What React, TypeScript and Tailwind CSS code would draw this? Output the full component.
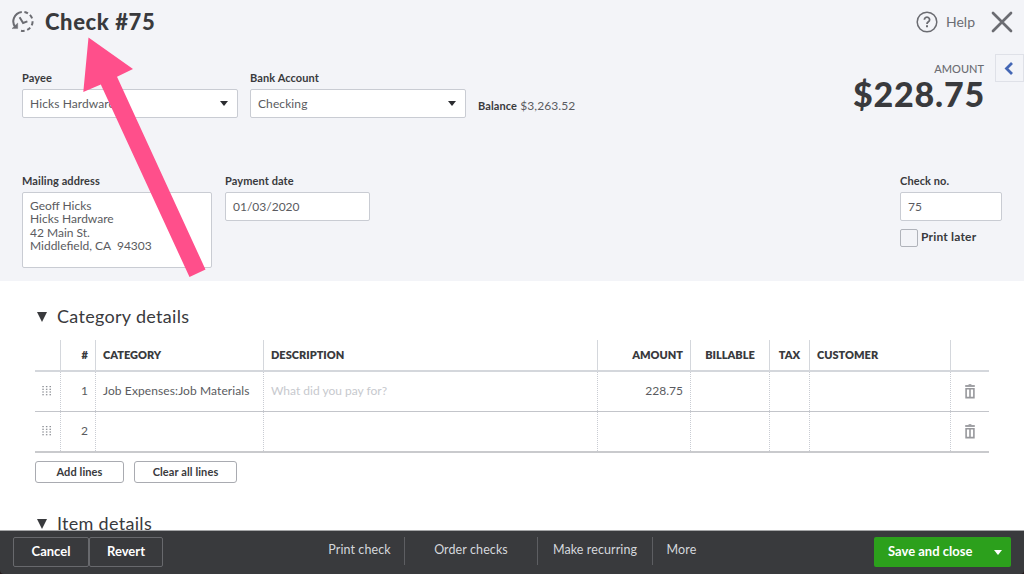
import React from 'react';
import type { ReactNode } from 'react';
import clsx from 'clsx';

const HistoryIcon: React.FC = () => (
  <svg className="h-6 w-6 text-[#6b6c72]" viewBox="0 0 24 24" fill="none" stroke="currentColor" strokeWidth={2}>
    <path d="M4.600 17.600A9.600 9.600 0 0 1 10.800 1.900" />
    <path d="M13.400 1.900a9.600 9.600 0 0 1 3.500 1.400" />
    <path d="M18.900 4.900a9.600 9.600 0 0 1 2.200 3.500" />
    <path d="M21.600 11.200a9.600 9.600 0 0 1-.9 4.100" />
    <path d="M19.200 17.600a9.600 9.600 0 0 1-3 2.300" />
    <path d="M13.600 20.800a9.600 9.600 0 0 1-3.600-.1" />
    <path d="M1 18.600h5.700v-5.600z" fill="currentColor" strokeWidth={0.4} />
    <path d="M8.600 7.200l3.500 5.800 4.300-1.600" />
  </svg>
);

const HelpIcon: React.FC = () => (
  <svg className="h-[22px] w-[22px] text-[#6b6c72]" viewBox="0 0 22 22" fill="none" stroke="currentColor">
    <circle cx="11" cy="11" r="9.8" strokeWidth={1.5} />
    <path d="M8.400 8.700a2.600 2.500 0 1 1 4 2.100c-.9.6-1.4 1-1.4 2.100" strokeWidth={1.8} />
    <path d="M11 14.200v2" strokeWidth={2} />
  </svg>
);

const CloseIcon: React.FC = () => (
  <svg className="h-[22px] w-[22px] text-[#6b6c72]" viewBox="0 0 22 22" stroke="currentColor" strokeWidth={2.7} strokeLinecap="round">
    <path d="M2 2l18 18M20 2L2 20" />
  </svg>
);

const TrashIcon: React.FC = () => (
  <svg className="h-[15px] w-[10px] text-[#97989c]" viewBox="0 0 10 15" fill="none" stroke="currentColor">
    <path d="M.2 2h9.600" strokeWidth={1.8} />
    <path d="M3.600.7h2.800" strokeWidth={1} />
    <path d="M1.100 4.800h7.800v8.800H1.100z" strokeWidth={1.6} />
    <path d="M5 5v8.400" strokeWidth={1.6} />
  </svg>
);

const DragHandle: React.FC = () => (
  <svg className="h-[10px] w-[10px] text-[#8d9096]" viewBox="0 0 10 10" fill="currentColor">
    {[0.3, 3.9, 7.5].map((x) =>
      [0, 2.7, 5.4, 8.1].map((y) => <rect key={`${x}-${y}`} x={x} y={y} width="1.5" height="1.2" />)
    )}
  </svg>
);

interface CaretProps {
  className?: string;
}

const Caret: React.FC<CaretProps> = ({ className = '' }) => (
  <svg className={className} viewBox="0 0 10 6" preserveAspectRatio="none" fill="currentColor">
    <path d="M0 0h10L5 6z" />
  </svg>
);

interface FieldProps {
  label: string;
  className?: string;
  children: ReactNode;
}

const Field: React.FC<FieldProps> = ({ label, className = '', children }) => (
  <div className={className}>
    <div className="h-[18px] text-[11px] leading-[13px] font-bold tracking-[0.1px]">{label}</div>
    {children}
  </div>
);

interface SelectBoxProps {
  value: string;
}

const SelectBox: React.FC<SelectBoxProps> = ({ value }) => (
  <div className="flex h-[29px] items-center justify-between rounded-[2px] border border-[#c9ccd3] bg-white pr-[9px] pl-[7px] text-xs text-[#5a5b60]">
    <span className="tracking-[0.1px]">{value}</span>
    <Caret className="h-[5px] w-2 text-[#2b2c30]" />
  </div>
);

interface TextBoxProps {
  value: string;
}

const TextBox: React.FC<TextBoxProps> = ({ value }) => (
  <div className="flex h-[29px] items-center rounded-[2px] border border-[#c9ccd3] bg-white px-[7px] text-xs text-[#5a5b60]">
    {value}
  </div>
);

interface SectionTitleProps {
  children: ReactNode;
}

const SectionTitle: React.FC<SectionTitleProps> = ({ children }) => (
  <div className="flex h-6 items-center gap-[10px] pl-[2px] text-lg tracking-[0.3px]">
    <Caret className="mt-px h-[10px] w-[10px]" />
    {children}
  </div>
);

const ROW_GRID = 'grid grid-cols-[26px_35px_168px_334px_93px_79px_40px_141px_38px]';

const headings = [
  { label: '' },
  { label: '#', align: 'justify-end' },
  { label: 'CATEGORY' },
  { label: 'DESCRIPTION' },
  { label: 'AMOUNT', align: 'justify-end' },
  { label: 'BILLABLE', align: 'justify-center' },
  { label: 'TAX', align: 'justify-center' },
  { label: 'CUSTOMER' },
  { label: '' }
];

const lines = [
  { category: 'Job Expenses:Job Materials', placeholder: 'What did you pay for?', amount: '228.75' },
  { category: '', placeholder: '', amount: '' }
];

const cell = 'flex items-center border-r border-dotted border-[#c9ccd3] px-[7px] pb-px';

const LinesTable: React.FC = () => (
  <div className="w-[954px] text-xs text-[#5a5b60]">
    <div className={clsx(ROW_GRID, 'h-[32px] border-b-2 border-[#d4d7dc] text-[11px] font-extrabold text-[#393a3d]')}>
      {headings.map((heading, i) => (
        <div
          key={i}
          className={clsx(
            'flex items-center border-[#d4d7dc]',
            i < 8 && 'border-r',
            heading.label !== 'TAX' && 'px-[7px]',
            heading.align
          )}
        >
          {heading.label}
        </div>
      ))}
    </div>
    {lines.map((line, i) => (
      <div
        key={i}
        className={clsx(ROW_GRID, i === 0 ? 'h-10 border-b border-[#c3c5ca]' : 'h-[41px] border-b-2 border-[#c9cacd]')}
      >
        <div className={cell}>
          <DragHandle />
        </div>
        <div className={clsx(cell, 'justify-end')}>{i + 1}</div>
        <div className={clsx(cell, 'tracking-[0.1px]')}>
          <span className="whitespace-nowrap">{line.category}</span>
        </div>
        <div className={clsx(cell, 'text-[#c7c9ce]')}>{line.placeholder}</div>
        <div className={clsx(cell, 'justify-end')}>{line.amount}</div>
        <div className={cell} />
        <div className={cell} />
        <div className={cell} />
        <div className="flex items-center justify-center">
          <TrashIcon />
        </div>
      </div>
    ))}
  </div>
);

const CheckHeader: React.FC = () => (
  <header className="flex h-[281px] shrink-0 flex-col bg-[#f3f4f8]">
    <div className="flex h-[43px] items-center justify-between px-[11px]">
      <div className="flex items-center gap-[10px]">
        <HistoryIcon />
        <h1 className="text-[22px] leading-6 font-black tracking-[0.6px]">Check #75</h1>
      </div>
      <div className="flex items-center text-sm text-[#6b6c72]">
        <HelpIcon />
        <span className="ml-[8px]">Help</span>
        <span className="ml-[16px]">
          <CloseIcon />
        </span>
      </div>
    </div>

    <div className="flex h-[131px] justify-between pl-[22px]">
      <div className="flex pt-[28px]">
        <Field label="Payee" className="w-[216px]">
          <SelectBox value="Hicks Hardware" />
        </Field>
        <Field label="Bank Account" className="ml-3 w-[216px]">
          <SelectBox value="Checking" />
        </Field>
        <div className="ml-3 pt-[27px] text-xs tracking-[0.1px] text-[#5a5b60]">
          <span className="text-[11px] font-bold text-[#393a3d]">Balance</span> $3,263.52
        </div>
      </div>
      <div className="flex gap-[11px] pt-[11px]">
        <div className="pt-[8px] text-right">
          <div className="text-[11px] leading-[14px] font-medium text-[#6b6c72]">AMOUNT</div>
          <div className="-mr-px text-[34px] leading-[36px] font-black tracking-[0.8px]">$228.75</div>
        </div>
        <div className="flex h-[28px] w-[29px] items-center justify-center border border-[#dfe1e8] pr-[2px] text-[#4467b5]">
          <svg className="h-[13px] w-[10px]" viewBox="0 0 10 13" fill="none" stroke="currentColor" strokeWidth={2.8}>
            <path d="M8 1L2.500 6.500 8 12" />
          </svg>
        </div>
      </div>
    </div>

    <div className="flex px-[22px]">
      <Field label="Mailing address" className="w-[190px]">
        <div className="h-[76px] rounded-[2px] border border-[#c9ccd3] bg-white px-[7px] pt-[6px] text-xs leading-[13.3px] whitespace-pre text-[#5a5b60]">
          {'Geoff Hicks\nHicks Hardware\n42 Main St.\nMiddlefield, CA  94303'}
        </div>
      </Field>
      <Field label="Payment date" className="ml-[13px] w-[145px]">
        <TextBox value="01/03/2020" />
      </Field>
      <Field label="Check no." className="ml-auto w-[102px]">
        <TextBox value="75" />
        <div className="mt-2 flex gap-[3px] text-xs font-bold tracking-[0.2px]">
          <span className="h-[18px] w-[18px] rounded-[2px] border border-[#b0b3ba]" />
          Print later
        </div>
      </Field>
    </div>
  </header>
);

const ACTIONS = [
  { label: 'Print check', width: 'w-[90px]' },
  { label: 'Order checks', width: 'w-[133px]' },
  { label: 'Make recurring', width: 'w-[115px]' },
  { label: 'More', width: 'w-[57px]' }
];

const ActionBar: React.FC = () => (
  <footer className="flex h-[44px] shrink-0 rounded-b-[4px] border-t border-[#a5a6a8] bg-[#393a3d] px-[13px] text-[13px] text-white">
    <div className="flex pt-[6px] font-bold">
      <button className="h-[30px] w-[76px] rounded-[2px] border border-[#68696d]">Cancel</button>
      <button className="h-[30px] w-[74px] rounded-[2px] border border-[#68696d]">Revert</button>
    </div>
    <nav className="ml-[152px] flex pt-[6px] text-[12.5px] tracking-[0.1px] text-[#d4d7dc]">
      {ACTIONS.map((action, i) => (
        <div
          key={action.label}
          className={clsx(
            'flex h-[28px] items-center justify-center pb-[2px] whitespace-nowrap',
            action.width,
            i < ACTIONS.length - 1 && 'border-r border-[#5d5e62]'
          )}
        >
          {action.label}
        </div>
      ))}
    </nav>
    <button className="mt-[6px] ml-auto flex h-[30px] w-[137px] items-center justify-between rounded-[2px] bg-[#2ca01c] pr-[9px] pl-[14px] font-bold">
      Save and close
      <Caret className="h-[5px] w-2" />
    </button>
  </footer>
);

// Callout arrow that lies over the form and points at the title
const Pointer: React.FC = () => (
  <svg className="pointer-events-none absolute top-0 left-0 h-[281px] w-[220px]" viewBox="0 0 220 281">
    <path fill="#ff4f8b" d="M88.500 37.500L133 69l-16 7.700L205.500 269.500 189.500 277 100.800 84.500 83.300 92z" />
  </svg>
);

export default function App() {
  return (
    <div className="relative flex h-[574px] w-[1024px] flex-col overflow-hidden bg-[#24191a] font-['Lato','Open_Sans',sans-serif] text-[#393a3d]">
      <CheckHeader />
      <main className="min-h-0 flex-1 overflow-hidden bg-white pt-[23px] pl-[35px]">
        <SectionTitle>Category details</SectionTitle>
        <div className="pt-[12px]">
          <LinesTable />
        </div>
        <div className="flex gap-[10px] pt-[8px] pb-[28px] text-[11px] font-bold tracking-[0.1px]">
          <button className="h-[22px] w-[89px] rounded-[3px] border border-[#a9abb1]">Add lines</button>
          <button className="h-[22px] w-[103px] rounded-[3px] border border-[#a9abb1]">Clear all lines</button>
        </div>
        <SectionTitle>Item details</SectionTitle>
      </main>
      <ActionBar />
      <Pointer />
    </div>
  );
}
